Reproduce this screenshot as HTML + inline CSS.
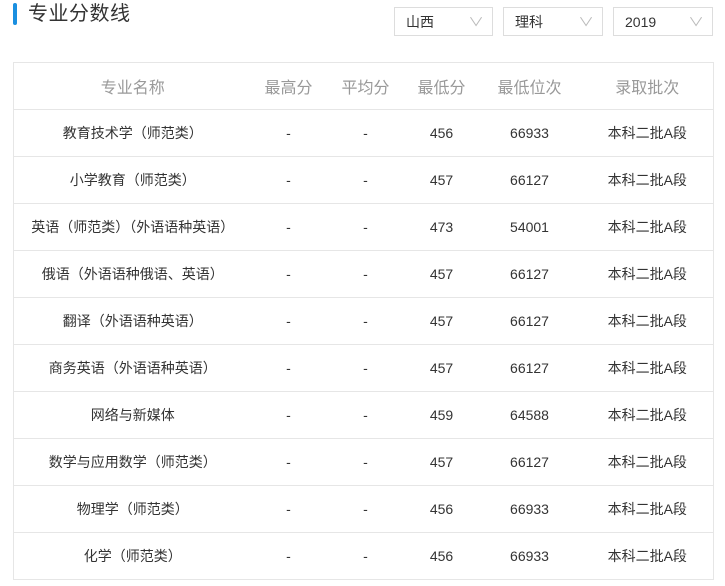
<!DOCTYPE html>
<html><head><meta charset="utf-8"><style>
body{margin:0;background:#fff;font-family:"Liberation Sans","Noto Sans CJK SC",sans-serif;width:725px;height:586px;overflow:hidden;position:relative}
.bar{position:absolute;left:13px;top:3px;width:4px;height:22px;background:#1a8fe0;border-radius:2px}
.title{position:absolute;left:28px;top:0;font-size:20px;color:#333;line-height:28px;letter-spacing:0.5px}
.sel{position:absolute;top:7px;height:29px;border:1px solid #ddd;box-sizing:border-box;font-size:14px;color:#333;line-height:28px;padding-left:11px}
.sel span{position:absolute;right:10px;top:0;color:#bbb;font-size:12px;transform:scaleX(1.3)}
table{position:absolute;left:13px;top:62px;width:701px;border-collapse:collapse;border:1px solid #e6e6e6}
td,th{height:46px;border-top:1px solid #e6e6e6;text-align:center;font-size:14px;color:#333;padding:0;font-weight:normal}
th{font-size:16px;color:#999}
</style></head><body>
<div class="bar"></div><div class="title">专业分数线</div>
<div class="sel" style="left:394px;width:99px">山西<span>∨</span></div>
<div class="sel" style="left:503px;width:100px">理科<span>∨</span></div>
<div class="sel" style="left:613px;width:100px">2019<span>∨</span></div>
<table>
<colgroup><col style="width:238px"><col style="width:74px"><col style="width:80px"><col style="width:72px"><col style="width:104px"><col></colgroup>
<tr><th>专业名称</th><th>最高分</th><th>平均分</th><th>最低分</th><th>最低位次</th><th>录取批次</th></tr>
<tr><td>教育技术学（师范类）</td><td>-</td><td>-</td><td>456</td><td>66933</td><td>本科二批A段</td></tr>
<tr><td>小学教育（师范类）</td><td>-</td><td>-</td><td>457</td><td>66127</td><td>本科二批A段</td></tr>
<tr><td>英语（师范类）（外语语种英语）</td><td>-</td><td>-</td><td>473</td><td>54001</td><td>本科二批A段</td></tr>
<tr><td>俄语（外语语种俄语、英语）</td><td>-</td><td>-</td><td>457</td><td>66127</td><td>本科二批A段</td></tr>
<tr><td>翻译（外语语种英语）</td><td>-</td><td>-</td><td>457</td><td>66127</td><td>本科二批A段</td></tr>
<tr><td>商务英语（外语语种英语）</td><td>-</td><td>-</td><td>457</td><td>66127</td><td>本科二批A段</td></tr>
<tr><td>网络与新媒体</td><td>-</td><td>-</td><td>459</td><td>64588</td><td>本科二批A段</td></tr>
<tr><td>数学与应用数学（师范类）</td><td>-</td><td>-</td><td>457</td><td>66127</td><td>本科二批A段</td></tr>
<tr><td>物理学（师范类）</td><td>-</td><td>-</td><td>456</td><td>66933</td><td>本科二批A段</td></tr>
<tr><td>化学（师范类）</td><td>-</td><td>-</td><td>456</td><td>66933</td><td>本科二批A段</td></tr>
</table>
</body></html>
